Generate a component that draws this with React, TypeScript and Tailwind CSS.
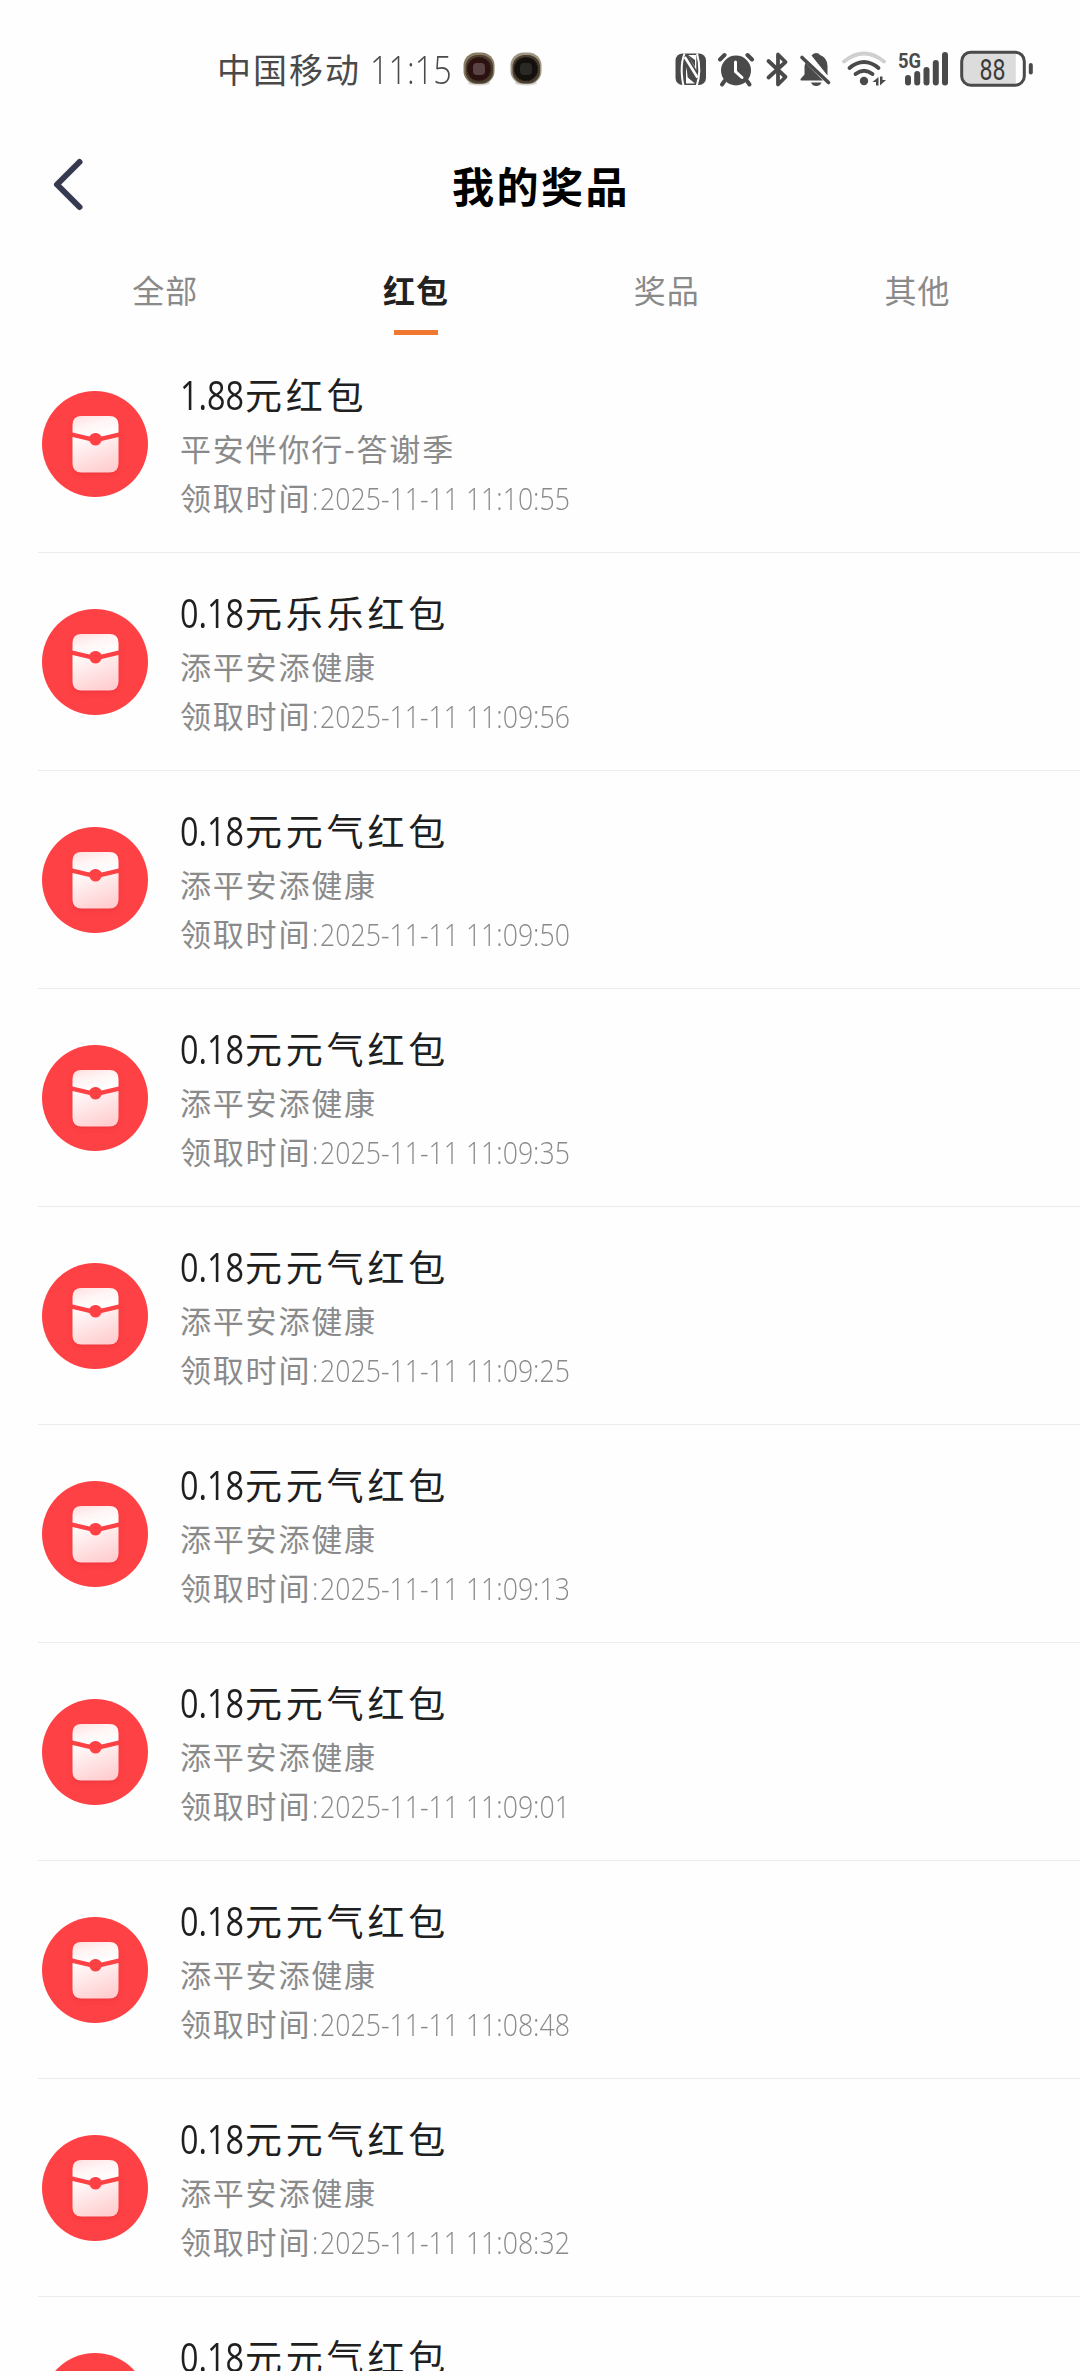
import React from "react";

const ink = "#4a4a4a";

type Reward = { amount: string; name: string; source?: string; time?: string };

const rewards: Reward[] = [
  { amount: "1.88", name: "元红包", source: "平安伴你行-答谢季", time: "2025-11-11 11:10:55" },
  { amount: "0.18", name: "元乐乐红包", source: "添平安添健康", time: "2025-11-11 11:09:56" },
  { amount: "0.18", name: "元元气红包", source: "添平安添健康", time: "2025-11-11 11:09:50" },
  { amount: "0.18", name: "元元气红包", source: "添平安添健康", time: "2025-11-11 11:09:35" },
  { amount: "0.18", name: "元元气红包", source: "添平安添健康", time: "2025-11-11 11:09:25" },
  { amount: "0.18", name: "元元气红包", source: "添平安添健康", time: "2025-11-11 11:09:13" },
  { amount: "0.18", name: "元元气红包", source: "添平安添健康", time: "2025-11-11 11:09:01" },
  { amount: "0.18", name: "元元气红包", source: "添平安添健康", time: "2025-11-11 11:08:48" },
  { amount: "0.18", name: "元元气红包", source: "添平安添健康", time: "2025-11-11 11:08:32" },
  { amount: "0.18", name: "元元气红包" },
];

const tabs = ["全部", "红包", "奖品", "其他"];

function CameraBadge({ lens, core, rim }: { lens: string; core: string; rim: string }) {
  return (
    <svg className="h-[34px] w-[34px]" viewBox="0 0 34 34">
      <ellipse cx="17" cy="31" rx="11" ry="2.500" fill="#d8d4d2" />
      <rect x="1.500" y="0.500" width="31" height="31.500" rx="13" fill={rim} />
      <rect x="3.500" y="3" width="27.500" height="28.500" rx="12" fill="#4a4032" />
      <circle cx="17" cy="17" r="12.300" fill={lens} />
      <circle cx="17" cy="17" r="12" fill="none" stroke="#6a5238" strokeWidth="0.800" strokeDasharray="1 1.400" />
      <rect x="11" y="11" width="12" height="12" rx="4" fill={core} />
    </svg>
  );
}

function StatusIcons() {
  return (
    <div className="flex h-[38px] items-center">
      {/* NFC */}
      <svg className="h-[38px] w-[43px]" viewBox="675 50 43 38">
        <rect x="675.500" y="53.500" width="30.500" height="31.500" rx="7" fill={ink} />
        <path d="M684.500 53.500Q681.500 61 681.700 71Q682 80 683.500 85.500M697 53.500Q699.500 62 699.300 71Q699 79 696.800 85.500" fill="none" stroke="#fefefe" strokeWidth="2" />
        <path d="M684.800 57L697.500 77.500" fill="none" stroke="#fefefe" strokeWidth="2.600" />
        <path d="M686 67V83.500H695L688.500 78zM696.300 70V55H688z" fill="#fefefe" />
        <path d="M687.500 70V77L695.500 83.500zM687.500 54.500L695 60V67z" fill={ink} />
      </svg>
      {/* Alarm */}
      <svg className="h-[38px] w-[46px]" viewBox="718 50 46 38">
        <circle cx="736" cy="70.500" r="15" fill={ink} />
        <path d="M720 59.500l4.500-4.500M747.500 55l4.500 4.500" stroke={ink} strokeWidth="4" strokeLinecap="round" />
        <path d="M724.500 81l-2.500 3.500M747 81l2.500 3.500" stroke={ink} strokeWidth="4" strokeLinecap="round" />
        <path d="M735.500 62v9.500l6.500 6" fill="none" stroke="#fefefe" strokeWidth="3" strokeLinecap="round" />
      </svg>
      {/* Bluetooth */}
      <svg className="h-[38px] w-[34px]" viewBox="764 50 34 38">
        <path d="M768.500 61L785.500 77 778 84.500V54.500L785.500 62 768.500 77.500" fill="none" stroke={ink} strokeWidth="3.800" strokeLinecap="round" strokeLinejoin="round" />
      </svg>
      {/* Muted bell */}
      <svg className="h-[38px] w-[42px]" viewBox="798 50 42 38">
        <path d="M811.500 55.500Q813 53 816 53Q819 53 820 55Q827.500 58 827.500 66V75.500zM805.500 63L823 80.500H801.500Q800.300 80.500 800.500 79L804.500 74.500V67Q804.500 65 805.500 63z" fill={ink} />
        <path d="M811 82.500h10.500Q820 86 816.200 86Q812.500 86 811 82.500z" fill={ink} />
        <path d="M802 57.500L828.500 82.500" stroke={ink} strokeWidth="3.600" strokeLinecap="round" />
      </svg>
      {/* Wi-Fi */}
      <svg className="h-[38px] w-[56px]" viewBox="840 50 56 38">
        <g fill="none" strokeLinecap="round" strokeWidth="3.800">
          <path d="M844 61.500Q864 45.500 884 61.500" stroke="#cfcfcf" />
          <path d="M849.500 68Q864 56 878.500 68" stroke={ink} />
          <path d="M855.500 74Q864 67.500 872.500 74" stroke={ink} />
        </g>
        <circle cx="864" cy="81" r="4.200" fill={ink} />
        <path d="M878.500 77v8.500h-2.500v-3.500h-3.500zM880 76.500h2.500v3.500h3.500L880 85.500z" fill={ink} />
      </svg>
      {/* Mobile signal */}
      <svg className="h-[38px] w-[64px]" viewBox="896 50 64 38">
        <text x="898" y="67.500" textLength="23" lengthAdjust="spacingAndGlyphs" fontFamily="Roboto, sans-serif" fontWeight="700" fontSize="20.500" fill={ink}>5G</text>
        <g fill={ink}>
          <rect x="905" y="75" width="6" height="10.500" rx="3" />
          <rect x="914.200" y="71" width="6" height="14.500" rx="3" />
          <rect x="923.500" y="67" width="6" height="18.500" rx="3" />
          <rect x="932.800" y="60" width="6" height="25.500" rx="3" />
          <rect x="942" y="52" width="6" height="33.500" rx="3" />
        </g>
      </svg>
      {/* Battery */}
      <svg className="h-[38px] w-[75px]" viewBox="960 49.500 75 38">
        <path d="M972 52H1015.800V84H972Q962 84 962 74V62Q962 52 972 52z" fill="#dcdcdc" />
        <rect x="961.700" y="51.700" width="62.600" height="33" rx="9" fill="none" stroke={ink} strokeWidth="3" />
        <rect x="1028.800" y="62.500" width="4" height="11.500" rx="2" fill={ink} />
        <text x="979.500" y="79.500" textLength="26" lengthAdjust="spacingAndGlyphs" fontFamily="Roboto, sans-serif" fontWeight="400" fontSize="30" fill="#3a3a3a">88</text>
      </svg>
    </div>
  );
}

function PacketIcon() {
  return (
    <svg className="h-[106px] w-[106px] shrink-0" viewBox="0 0 106 106">
      <defs>
        <linearGradient id="flap" x1="0" y1="0" x2="0.6" y2="1">
          <stop offset="0" stopColor="#ffdede" />
          <stop offset="0.5" stopColor="#fff5f5" />
          <stop offset="1" stopColor="#fff" />
        </linearGradient>
        <linearGradient id="pocket" x1="0.2" y1="0" x2="0.7" y2="1">
          <stop offset="0" stopColor="#fffafa" />
          <stop offset="1" stopColor="#ffcdcf" />
        </linearGradient>
        <filter id="shade" x="-30%" y="-30%" width="160%" height="160%">
          <feGaussianBlur stdDeviation="2.500" />
        </filter>
      </defs>
      <circle cx="53" cy="53" r="53" fill="#fe4145" />
      <rect x="31" y="30" width="45" height="53" rx="8" fill="#d92b30" opacity="0.5" filter="url(#shade)" />
      <rect x="30.500" y="25" width="46" height="56" rx="9" fill="#fe4145" />
      <path d="M30.500 41.500V34Q30.500 25 39.500 25H67.500Q76.500 25 76.500 34V41.500L59.500 45.500Q57.500 42 53.500 42Q49.500 42 47.500 45.500Z" fill="url(#flap)" />
      <path d="M30.500 46V72.500Q30.500 81.500 39.500 81.500H67.500Q76.500 81.500 76.500 72.500V46L59.500 50Q57.500 54.500 53.500 54.500Q49.500 54.500 47.500 50Z" fill="url(#pocket)" />
    </svg>
  );
}

function RewardRow({ reward }: { reward: Reward }) {
  return (
    <li className="ml-[38px] flex h-[218px] shrink-0 items-start border-b border-[#ebebeb] pl-[3.5px]">
      <div className="pt-[56px]">
        <PacketIcon />
      </div>
      <div className="ml-[32.5px] pt-[31px] whitespace-nowrap">
        <div className="flex h-14 items-center text-[#1f1f1f]">
          <span className="w-[65px]">
            <span className="inline-block origin-left scale-x-[0.81] pt-px font-['Open_Sans'] text-[40px] leading-[54px] font-[380]">{reward.amount}</span>
          </span>
          <span className="text-[37px] leading-[56px] tracking-[3.8px]">{reward.name}</span>
        </div>
        {reward.source && (
          <div className="flex h-[52px] items-center text-[31px] leading-[52px] tracking-[1.8px] text-[#8a8a8a]">
            {reward.source}
          </div>
        )}
        {reward.time && (
          <div className="flex h-[46px] items-center text-[#8a8a8a]">
            <span className="w-[132px] text-[31px] leading-[46px] tracking-[1.8px]">领取时间</span>
            <span className="inline-block origin-left scale-x-[0.86] pt-0.5 font-['Open_Sans'] text-[31px] leading-[44px] font-[360]">
              <span className="pr-[2px]">:</span>
              {reward.time}
            </span>
          </div>
        )}
      </div>
    </li>
  );
}

export default function App() {
  return (
    <div className="flex h-[2376px] w-[1080px] flex-col bg-[#fefefe] font-['Noto_Sans_CJK_SC',sans-serif]">
      <div className="flex h-[138px] shrink-0 items-center justify-between pr-[45px] pl-[217px] text-[#4a4a4a]">
        <div className="flex items-center">
          <span className="w-[153px] text-[34px] leading-10 tracking-[2px]">中国移动</span>
          <span className="w-[92px]">
            <span className="inline-block origin-left scale-x-[0.83] font-['Open_Sans'] text-[39px] leading-10 font-[340]">11:15</span>
          </span>
          <div className="flex gap-[13px]">
            <CameraBadge rim="#8a7c62" lens="#2b1210" core="#5a4443" />
            <CameraBadge rim="#a09582" lens="#14100d" core="#2b2925" />
          </div>
        </div>
        <StatusIcons />
      </div>

      <header className="grid h-[93px] shrink-0 grid-cols-[200px_1fr_200px] items-center">
        <svg className="ml-[50px] h-[56px] w-[36px]" viewBox="50 157 36 56">
          <path d="M79.500 162L57 184.500L79.500 207" fill="none" stroke="#363a50" strokeWidth="6" strokeLinecap="round" strokeLinejoin="round" />
        </svg>
        <h1 className="pl-[2px] text-center text-[42px] leading-[60px] font-bold tracking-[2.5px] text-black">我的奖品</h1>
      </header>

      <nav className="grid h-[104px] shrink-0 grid-cols-4 pr-[37px] pl-[40px]">
        {tabs.map((tab) => {
          const active = tab === "红包";
          return (
            <div key={tab} className="flex flex-col items-center pt-[34px]">
              <span className={active ? "text-[32px] leading-[48px] font-bold tracking-[1px] text-[#222]" : "text-[32px] leading-[48px] tracking-[1px] text-[#8a8a8a]"}>{tab}</span>
              {active && <span className="mt-[17px] h-[5px] w-[44px] bg-[#f07830]" />}
            </div>
          );
        })}
      </nav>

      <ul className="flex h-[2036px] shrink-0 flex-col overflow-hidden">
        {rewards.map((reward, i) => (
          <RewardRow key={i} reward={reward} />
        ))}
      </ul>
    </div>
  );
}
